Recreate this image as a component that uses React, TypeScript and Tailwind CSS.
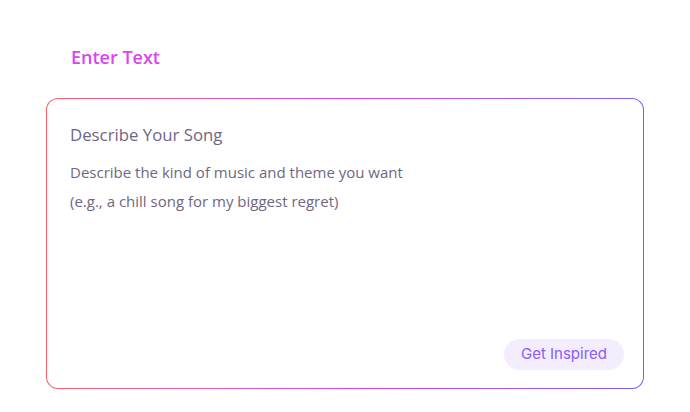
const App = (): JSX.Element => {
  return (
    <div className="w-[690px] h-[412px] bg-white px-[46px] pt-[44px]" style={{ fontFamily: '"Open Sans", "Noto Sans", sans-serif' }}>
      <h2 className="pl-[25px] text-[18px] leading-[26px] font-semibold text-[#d946ef]">Enter Text</h2>
      <div className="mt-[28px] rounded-[12px] p-px bg-linear-to-r from-[#f5606a] via-[#d946ef] to-[#7c5cf5]">
        <div className="h-[289px] rounded-[11px] bg-white pl-[23px] pr-[19px] pt-[23px] pb-[18px] flex flex-col">
          <p className="text-[16.8px] leading-[26px] text-[#6f6782]">Describe Your Song</p>
          <div className="mt-[10px] text-[15px] leading-[29px] text-[#6f6782]">
            <p>Describe the kind of music and theme you want</p>
            <p>(e.g., a chill song for my biggest regret)</p>
          </div>
          <div className="mt-auto flex justify-end">
            <button
              className="h-[31px] w-[120px] rounded-full bg-[#f3edfe] text-[#8b5cf6] text-[15px]"
              style={{ fontFamily: 'Inter, sans-serif' }}
            >
              Get Inspired
            </button>
          </div>
        </div>
      </div>
    </div>
  );
};

export default App;
